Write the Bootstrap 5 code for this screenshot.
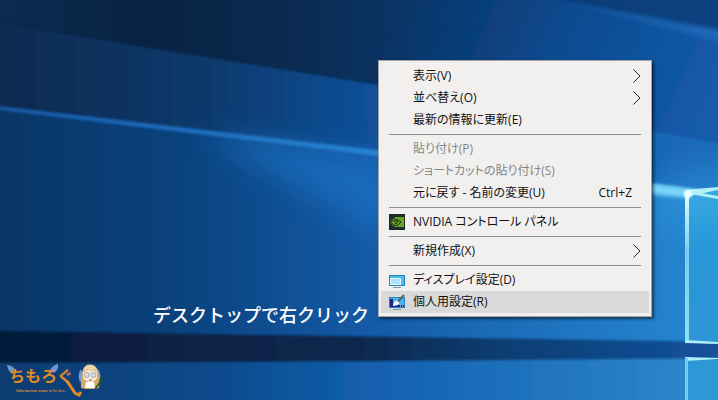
<!DOCTYPE html>
<html lang="ja">
<head>
<meta charset="utf-8">
<meta name="viewport" content="width=device-width, initial-scale=1">
<title>デスクトップで右クリック</title>
<link href="https://cdn.jsdelivr.net/npm/bootstrap@5.3.0/dist/css/bootstrap.min.css" rel="stylesheet">
<style>
  .desktop { background: #0c4a8c; font-family: "Open Sans", "Noto Sans CJK JP", sans-serif; }
  .wallpaper { z-index: 0; }
  .caption-text { left: 153px; top: 301px; font-family: "Noto Sans CJK JP", sans-serif; font-size: 18px; line-height: 26px; font-weight: 500; color: #fff; white-space: nowrap; }
  .context-menu { left: 378px; top: 60px; width: 274px; padding: 4px 2px 3px; background: #f1f0ef; border: 1px solid #a5a5a5; box-shadow: 2px 2px 3px rgba(0,0,0,.55); }
  .menu-row { height: 22px; padding: 0 8px; border: 0; background: transparent; color: #111; font-size: 12px; line-height: 22px; text-align: left; white-space: nowrap; font-feature-settings: "palt"; }
  .menu-row:disabled { color: #858585; }
  .menu-row.is-active, .menu-row:hover:enabled { background: #d9d9d9; }
  .menu-icon { width: 16px; height: 16px; flex: none; }
  .menu-label { padding-left: 8px; }
  .menu-key { padding-right: 9px; }
  .menu-rule { margin: 3px 8px; border-top: 1px solid #8f8f8f; opacity: 1; }
  .site-logo { left: 4px; bottom: 0; width: 100px; height: 40px; }
</style>
</head>
<body>
<main class="desktop position-relative vh-100 overflow-hidden">
  <svg class="wallpaper position-absolute top-0 start-0 w-100 h-100" viewBox="0 0 718 400" preserveAspectRatio="none" aria-hidden="true">
    <defs>
      <linearGradient id="sky" x1="0" x2="1" y1="0" y2="0"><stop offset="0" stop-color="#0a2b50"/><stop offset=".2" stop-color="#082342"/><stop offset=".4" stop-color="#0a2a50"/><stop offset=".6" stop-color="#0b376b"/><stop offset="1" stop-color="#0c4282"/></linearGradient>
      <linearGradient id="ray" gradientUnits="userSpaceOnUse" x1="400" x2="700" y1="0" y2="130"><stop offset="0" stop-color="#0b3d78" stop-opacity="0"/><stop offset=".5" stop-color="#0d4a90"/><stop offset="1" stop-color="#135bab"/></linearGradient>
      <linearGradient id="edge" gradientUnits="userSpaceOnUse" x1="520" x2="718" y1="0" y2="0"><stop offset="0" stop-color="#1a62b0" stop-opacity="0"/><stop offset="1" stop-color="#1d68b8"/></linearGradient>
      <linearGradient id="mid" gradientUnits="userSpaceOnUse" x1="0" x2="718" y1="0" y2="0"><stop offset="0" stop-color="#0a2a50"/><stop offset=".3" stop-color="#0a3a6e"/><stop offset=".52" stop-color="#12509a"/><stop offset="1" stop-color="#1b6cbb"/></linearGradient>
      <linearGradient id="low" gradientUnits="userSpaceOnUse" x1="0" x2="718" y1="0" y2="0"><stop offset="0" stop-color="#083665"/><stop offset=".25" stop-color="#0a427d"/><stop offset=".5" stop-color="#1459a5"/><stop offset=".9" stop-color="#2380ca"/><stop offset="1" stop-color="#2487d2"/></linearGradient>
      <linearGradient id="beam" gradientUnits="userSpaceOnUse" x1="0" x2="718" y1="0" y2="0"><stop offset="0" stop-color="#1557a3"/><stop offset=".5" stop-color="#2580d0"/><stop offset="1" stop-color="#5cc5f2"/></linearGradient>
      <linearGradient id="band" gradientUnits="userSpaceOnUse" x1="0" x2="718" y1="0" y2="0"><stop offset="0" stop-color="#061a3a"/><stop offset=".5" stop-color="#0a284d"/><stop offset=".72" stop-color="#0a3f75"/><stop offset="1" stop-color="#14529c"/></linearGradient>
      <linearGradient id="floor" gradientUnits="userSpaceOnUse" x1="0" x2="718" y1="0" y2="0"><stop offset="0" stop-color="#083c70"/><stop offset=".3" stop-color="#0c4a8c"/><stop offset=".55" stop-color="#1463b2"/><stop offset=".94" stop-color="#2c84c8"/><stop offset="1" stop-color="#2c93d6"/></linearGradient>
      <linearGradient id="pane" x1="0" x2="0" y1="0" y2="1"><stop offset="0" stop-color="#39a8e2"/><stop offset=".4" stop-color="#2897d9"/><stop offset="1" stop-color="#2f95d6"/></linearGradient>
      <linearGradient id="frame" x1="0" x2="0" y1="0" y2="1"><stop offset="0" stop-color="#e6ffff"/><stop offset=".4" stop-color="#7bcdec"/><stop offset="1" stop-color="#8de0ef"/></linearGradient>
      <filter id="b2" x="-20%" y="-20%" width="140%" height="140%"><feGaussianBlur stdDeviation="2"/></filter>
      <filter id="b1" x="-20%" y="-20%" width="140%" height="140%"><feGaussianBlur stdDeviation="1"/></filter>
      <filter id="b12" x="-50%" y="-50%" width="200%" height="200%"><feGaussianBlur stdDeviation="14"/></filter>
    </defs>
    <rect width="718" height="400" fill="url(#sky)"/>
    <path d="M380-20 540-4 730 35V160L380 90Z" fill="url(#ray)" filter="url(#b2)"/>
    <path d="M530-6 730 32V44Z" fill="url(#edge)" filter="url(#b2)"/>
    <path d="M-10 22 378 85 730 145V220H-10Z" fill="url(#mid)" filter="url(#b1)"/>
    <path d="M-10 106 378 152 730 196V345H-10Z" fill="url(#low)"/>
    <path d="M200 134 378 156 420 250 378 230Z" fill="#1d74c8" opacity=".6" filter="url(#b12)"/>
    <ellipse cx="710" cy="200" rx="60" ry="34" fill="#2f93da" opacity=".5" filter="url(#b12)"/>
    <path d="M-10 105 378 150 730 193V200L378 156-10 109Z" fill="url(#beam)" filter="url(#b1)"/>
    <path d="M640 183 690 190 730 194 690 198 640 193Z" fill="#7ed7f7" filter="url(#b2)"/>
    <path d="M-10 331 400 337 730 342V358L400 361-10 363Z" fill="url(#band)" filter="url(#b1)"/>
    <path d="M-10 363 400 361 730 358V410H-10Z" fill="url(#floor)" filter="url(#b1)"/>
    <path d="M686 192 718 188V344L686 342Z" fill="url(#pane)"/>
    <path d="M686 358 718 360V400H686Z" fill="#2d98d8"/>
    <path d="M685 192h4v150h-4z" fill="url(#frame)"/>
    <path d="M685 190 718 187V190L690 196ZM690 191 718 196V199L690 194ZM685 340l33 2v2l-33-1ZM685 357l33 1v1l-33 2Z" fill="#b0f0f8"/>
    <path d="M685 358h3v42h-3z" fill="#75ccec"/>
    <circle cx="688" cy="194" r="4" fill="#efffff" filter="url(#b1)"/>
  </svg>

  <p class="caption-text position-absolute m-0">デスクトップで右クリック</p>

  <div class="context-menu position-absolute d-flex flex-column" role="menu" aria-label="デスクトップ">
    <button type="button" role="menuitem" class="menu-row d-flex align-items-center w-100"><span class="menu-icon"></span><span class="menu-label flex-grow-1">表示(V)</span><svg width="8" height="14" viewBox="0 0 8 14" fill="none" stroke="#222"><path d="M.5.5 7 7 .5 13.5"/></svg></button>
    <button type="button" role="menuitem" class="menu-row d-flex align-items-center w-100"><span class="menu-icon"></span><span class="menu-label flex-grow-1">並べ替え(O)</span><svg width="8" height="14" viewBox="0 0 8 14" fill="none" stroke="#222"><path d="M.5.5 7 7 .5 13.5"/></svg></button>
    <button type="button" role="menuitem" class="menu-row d-flex align-items-center w-100"><span class="menu-icon"></span><span class="menu-label">最新の情報に更新(E)</span></button>
    <hr class="menu-rule">
    <button type="button" role="menuitem" class="menu-row d-flex align-items-center w-100" disabled><span class="menu-icon"></span><span class="menu-label">貼り付け(P)</span></button>
    <button type="button" role="menuitem" class="menu-row d-flex align-items-center w-100" disabled><span class="menu-icon"></span><span class="menu-label">ショートカットの貼り付け(S)</span></button>
    <button type="button" role="menuitem" class="menu-row d-flex align-items-center w-100"><span class="menu-icon"></span><span class="menu-label flex-grow-1">元に戻す - 名前の変更(U)</span><span class="menu-key">Ctrl+Z</span></button>
    <hr class="menu-rule">
    <button type="button" role="menuitem" class="menu-row d-flex align-items-center w-100">
      <svg class="menu-icon" viewBox="0 0 16 16"><path fill="#1d2a2e" d="M0 0h16v16H0z"/><path fill="#68a51c" d="M6 3h9v10H6Q3 12 1 8 3 5 6 4Z"/><path d="M2 8Q6 3 12 8 8 13 5 11 3 10 2 8Z" fill="none" stroke="#1d2a2e"/><path d="M5 8Q7 5 9 8 8 10 6 9.500" fill="none" stroke="#1d2a2e"/></svg>
      <span class="menu-label">NVIDIA コントロール パネル</span></button>
    <hr class="menu-rule">
    <button type="button" role="menuitem" class="menu-row d-flex align-items-center w-100"><span class="menu-icon"></span><span class="menu-label flex-grow-1">新規作成(X)</span><svg width="8" height="14" viewBox="0 0 8 14" fill="none" stroke="#222"><path d="M.5.5 7 7 .5 13.5"/></svg></button>
    <hr class="menu-rule">
    <button type="button" role="menuitem" class="menu-row d-flex align-items-center w-100">
      <svg class="menu-icon" viewBox="0 0 16 16"><path fill="#2583b5" d="M0 3h16v11H0z"/><path fill="#4cbcf0" d="M1 4h14v9H1z"/><path fill="#a8e2fb" stroke="#e8f8ff" d="M1.500 6.500h10v6h-10z"/><path fill="#7a9aaa" d="M4 15h8v1H4z"/></svg>
      <span class="menu-label">ディスプレイ設定(D)</span></button>
    <button type="button" role="menuitem" class="menu-row is-active d-flex align-items-center w-100">
      <svg class="menu-icon" viewBox="0 0 16 16"><path fill="#2583b5" d="M0 3h16v11H0z"/><path fill="#45b6ee" d="M1 4h14v9H1z"/><path fill="#25208a" d="M1 5h3v6h11v2H1z"/><path fill="#7a9aaa" d="M4 15h8v1H4z"/><path d="M4 12Q4 7.500 8 6.500L10.500 9Q9 12 4 12Z" fill="#f4f8fb"/><path d="M9 7.500 15 1" stroke="#59636b" stroke-width="2"/><path d="M11 12h1m1 0h1" stroke="#fff"/></svg>
      <span class="menu-label">個人用設定(R)</span></button>
  </div>

  <svg class="site-logo position-absolute" viewBox="0 0 100 40" role="img" aria-label="ちもろぐ">
    <path d="M3 5Q9 5 12 11L8 14Q4 11 3 5ZM54 4Q55 10 50 13L46 10Q49 5 54 4Z" fill="#6c96d4"/>
    <text x="5" y="22" font-family="Noto Sans CJK JP, sans-serif" font-weight="700" font-size="16" fill="#e08a28">ちもろぐ</text>
    <path d="M63 21 67 27 71 33 75 35 77 32" fill="none" stroke="#e08a28" stroke-width="3"/>
    <text x="12" y="32" font-family="Liberation Serif, serif" font-weight="700" font-size="4" fill="#c88a40">Information wants to be free.</text>
    <path d="M76 22Q73 15 77 9L80 19ZM94 9Q99 16 94 22Z" fill="#7299d8"/>
    <path d="M77 28Q76 4 86 4.500 97 4 95 28L90 29H81Z" fill="#cfac68"/>
    <path d="M79 12Q86 7 93 12V18Q91 22 86 22 80 21 79 17Z" fill="#f8e5d2"/>
    <path d="M79 11Q80 5 86 5 92 5 94 12L90 9 87 12 84 9Z" fill="#ead8a8"/>
    <path d="M82 22h8l1 6H81Z" fill="#fff"/>
    <circle cx="82.500" cy="15" r="2.500" fill="#d8dfe2" stroke="#7d8790" stroke-width=".6"/><circle cx="89.500" cy="15" r="2.500" fill="#d8dfe2" stroke="#7d8790" stroke-width=".6"/>
    <path d="M85 20h3" stroke="#c34a35"/><path d="M91 29 99 18" stroke="#295427" stroke-width="1.500"/>
  </svg>
</main>
<script src="https://cdn.jsdelivr.net/npm/bootstrap@5.3.0/dist/js/bootstrap.bundle.min.js"></script>
</body>
</html>
